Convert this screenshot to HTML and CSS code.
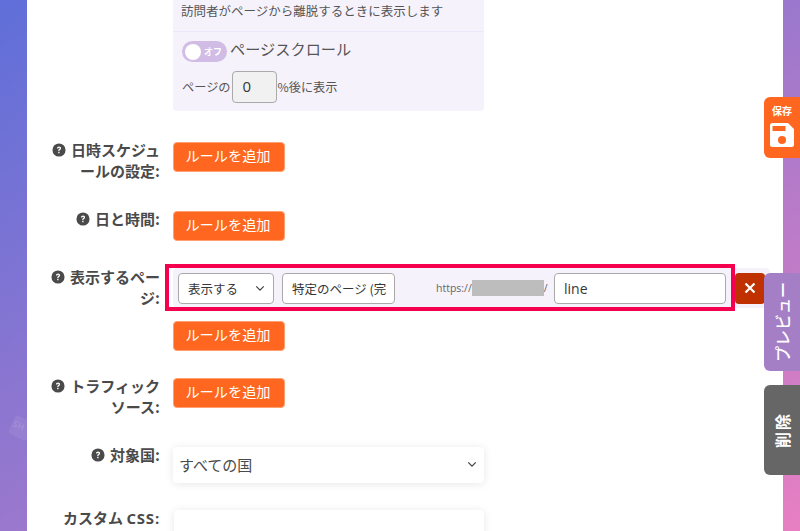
FILE: index.html
```html
<!DOCTYPE html>
<html lang="ja">
<head>
<meta charset="utf-8">
<title>設定</title>
<link rel="stylesheet" href="styles.css">
</head>
<body>
<div class="mark">SH</div>
<main class="panel">
  <section class="trigger-card">
    <p class="note">訪問者がページから離脱するときに表示します</p>
    <div class="scroll-block">
      <div class="toggle-line">
        <span class="toggle"><span class="knob"></span><span class="off">オフ</span></span>
        <span class="toggle-label">ページスクロール</span>
      </div>
      <div class="percent-line">
        <span>ページの</span>
        <span class="num">0</span>
        <span>%後に表示</span>
      </div>
    </div>
  </section>

  <div class="row row-schedule">
    <div class="label"><svg class="help" viewBox="0 0 16 16"><circle cx="8" cy="8" r="7.5" fill="#4a4a4a"/><path d="M5.7 6.2c0-1.4 1-2.2 2.4-2.2 1.3 0 2.3.8 2.3 2 0 1.7-1.9 1.7-1.9 3H7.100c0-2 1.800-2 1.800-3 0-.4-.3-.7-.8-.7-.6 0-.9.4-.9 1z" fill="#fff"/><rect x="7.100" y="10" width="1.500" height="1.700" fill="#fff"/></svg>日時スケジュールの設定:</div>
    <div class="value"><button class="add">ルールを追加</button></div>
  </div>

  <div class="row row-date">
    <div class="label"><svg class="help" viewBox="0 0 16 16"><circle cx="8" cy="8" r="7.5" fill="#4a4a4a"/><path d="M5.7 6.2c0-1.4 1-2.2 2.4-2.2 1.3 0 2.3.8 2.3 2 0 1.7-1.9 1.7-1.9 3H7.100c0-2 1.800-2 1.800-3 0-.4-.3-.7-.8-.7-.6 0-.9.4-.9 1z" fill="#fff"/><rect x="7.100" y="10" width="1.500" height="1.700" fill="#fff"/></svg>日と時間:</div>
    <div class="value"><button class="add">ルールを追加</button></div>
  </div>

  <div class="row row-pages">
    <div class="label label-pages"><svg class="help" viewBox="0 0 16 16"><circle cx="8" cy="8" r="7.5" fill="#4a4a4a"/><path d="M5.7 6.2c0-1.4 1-2.2 2.4-2.2 1.3 0 2.3.8 2.3 2 0 1.7-1.9 1.7-1.9 3H7.100c0-2 1.800-2 1.800-3 0-.4-.3-.7-.8-.7-.6 0-.9.4-.9 1z" fill="#fff"/><rect x="7.100" y="10" width="1.500" height="1.700" fill="#fff"/></svg>表示するページ:</div>
    <div class="value">
      <div class="rule">
        <div class="field select-show"><span>表示する</span><svg class="chev" viewBox="0 0 12 8"><path d="M1.500 1.500 6 6l4.500-4.500" fill="none" stroke="#444" stroke-width="1.500"/></svg></div>
        <div class="field select-kind"><span>特定のページ (完</span></div>
        <div class="url"><span>https://</span><span class="blur"></span><span>/</span></div>
        <div class="field path">line</div>
        <button class="remove" aria-label="削除"><svg viewBox="0 0 12 12"><path d="M1.500 1.500l9 9M10.500 1.500l-9 9" stroke="#fff" stroke-width="2.200" fill="none"/></svg></button>
      </div>
      <button class="add add-below">ルールを追加</button>
    </div>
  </div>

  <div class="row row-traffic">
    <div class="label"><svg class="help" viewBox="0 0 16 16"><circle cx="8" cy="8" r="7.5" fill="#4a4a4a"/><path d="M5.7 6.2c0-1.4 1-2.2 2.4-2.2 1.3 0 2.3.8 2.3 2 0 1.7-1.9 1.7-1.9 3H7.100c0-2 1.800-2 1.800-3 0-.4-.3-.7-.8-.7-.6 0-.9.4-.9 1z" fill="#fff"/><rect x="7.100" y="10" width="1.500" height="1.700" fill="#fff"/></svg>トラフィックソース:</div>
    <div class="value"><button class="add">ルールを追加</button></div>
  </div>

  <div class="row row-country">
    <div class="label"><svg class="help" viewBox="0 0 16 16"><circle cx="8" cy="8" r="7.5" fill="#4a4a4a"/><path d="M5.7 6.2c0-1.4 1-2.2 2.4-2.2 1.3 0 2.3.8 2.3 2 0 1.7-1.9 1.7-1.9 3H7.100c0-2 1.800-2 1.800-3 0-.4-.3-.7-.8-.7-.6 0-.9.4-.9 1z" fill="#fff"/><rect x="7.100" y="10" width="1.500" height="1.700" fill="#fff"/></svg>対象国:</div>
    <div class="value">
      <div class="country"><span>すべての国</span><svg class="chev" viewBox="0 0 12 8"><path d="M1.500 1.500 6 6l4.500-4.500" fill="none" stroke="#444" stroke-width="1.500"/></svg></div>
    </div>
  </div>

  <div class="row row-css">
    <div class="label label-css">カスタム <span class="latin">CSS:</span></div>
    <div class="value"><div class="css-box"></div></div>
  </div>
</main>

<div class="highlight"></div>

<aside class="tabs">
  <button class="tab tab-save">
    <span class="save-text">保存</span>
    <svg class="save-icon" viewBox="0 0 24 24"><path d="M0 2.500A2.500 2.500 0 0 1 2.500 0H18l6 6v15.500a2.500 2.500 0 0 1-2.500 2.500h-19A2.500 2.500 0 0 1 0 21.500z" fill="#fff"/><rect x="2.500" y="3" width="13" height="5" fill="#ff6720"/><circle cx="12" cy="17" r="4" fill="#ff6720"/></svg>
  </button>
  <button class="tab tab-preview"><span class="side">プレビュー</span></button>
  <button class="tab tab-delete"><span class="side side-small">削除</span></button>
</aside>
</body>
</html>
```
FILE: styles.css
```css
* { box-sizing: border-box; }
html, body { margin: 0; height: 531px; overflow: hidden; }
body {
  position: relative;
  background: linear-gradient(146deg, #5f6fd9 0%, #9a78cd 50%, #e87fc2 100%);
  font-family: "Noto Sans CJK JP", "Noto Sans", sans-serif;
  color: #4a4a4a;
}
.mark {
  position: absolute;
  left: 11px;
  top: 418px;
  width: 20px;
  height: 20px;
  padding: 3px 0 0 1px;
  background: rgba(255,255,255,.07);
  border-radius: 3px;
  color: rgba(255,255,255,.12);
  font: 700 9px/12px "Open Sans", sans-serif;
  transform: rotate(25deg);
}
.panel {
  margin: 0 17px 0 27px;
  height: 531px;
  background: #fff;
  overflow: hidden;
  padding-left: 146px;
}
.trigger-card {
  width: 311px;
  height: 111px;
  background: #f5f2fb;
  border-radius: 0 0 4px 4px;
}
.note {
  margin: 0;
  height: 32px;
  padding: 2px 0 0 8px;
  font-size: 12.5px;
  line-height: 18px;
  color: #555;
  border-bottom: 1px solid #eee7fa;
}
.scroll-block { padding: 9px 9px 0; }
.toggle-line { display: flex; align-items: center; height: 21px; gap: 3px; }
.toggle {
  width: 45px;
  height: 21px;
  border-radius: 11px;
  background: #d0bce5;
  display: flex;
  align-items: center;
  padding-left: 3px;
  gap: 3px;
}
.knob { width: 16px; height: 16px; border-radius: 50%; background: #fff; }
.off { color: #fff; font-size: 9px; font-weight: 700; line-height: 1; }
.toggle-label { font-size: 15.2px; color: #555; line-height: 20px; padding-bottom: 7px; }
.percent-line {
  display: flex;
  align-items: center;
  margin-top: 9px;
  font-size: 12.2px;
  color: #555;
  gap: 1px;
}
.num {
  width: 45px;
  height: 32px;
  background: #f1f1f1;
  border: 1px solid #aaa;
  border-radius: 4px;
  padding-left: 10px;
  font: 15px/29px "Open Sans", sans-serif;
  color: #363636;
}
.row { display: flex; }
.label {
  width: 133px;
  margin: -3px 13px 0 -146px;
  flex: none;
  padding-left: 20px;
  text-align: right;
  font-size: 15px;
  font-weight: 700;
  line-height: 21px;
  color: #4a4a4a;
}
.label-pages { margin-top: -6px; }
.help { width: 14px; height: 14px; margin-right: 5px; vertical-align: -1px; }
.value { width: 311px; flex: none; }
.add {
  display: block;
  width: 112px;
  height: 30px;
  padding: 0 2px 3px 0;
  background: #ff6720;
  border: 1px solid #ffa070;
  border-radius: 4px;
  color: #fff;
  font: 14.2px/25px "Noto Sans CJK JP", sans-serif;
}
.row-schedule { margin-top: 31px; height: 69px; }
.row-date { height: 61px; }
.row-pages { height: 106px; }
.row-traffic { height: 69px; }
.row-country { height: 63px; }
.rule {
  display: flex;
  align-items: center;
  width: 597px;
  height: 40px;
  margin-top: -4px;
  padding-left: 5px;
  background: #f5f2fb;
  border-radius: 4px;
}
.field {
  height: 31px;
  background: #fff;
  border: 1px solid #aaa;
  border-radius: 4px;
  display: flex;
  align-items: center;
  font-size: 12.5px;
  color: #363636;
  white-space: nowrap;
  overflow: hidden;
}
.select-show { width: 96px; padding: 0 8px 0 9px; justify-content: space-between; }
.select-kind { width: 113px; margin-left: 8px; padding-left: 9px; }
.url {
  width: 159px;
  display: flex;
  align-items: center;
  padding-left: 41px;
  font: 10.5px "Open Sans", sans-serif;
  color: #666;
}
.blur { width: 72px; height: 16px; background: #bdbdbd; }
.path {
  width: 172px;
  padding-left: 9px;
  font: 14px "Open Sans", sans-serif;
}
.remove {
  width: 30px;
  height: 31px;
  margin-left: 9px;
  padding: 0;
  border: 0;
  border-radius: 4px;
  background: #bf3100;
  display: flex;
  align-items: center;
  justify-content: center;
}
.remove svg { width: 12px; height: 12px; }
.add-below { margin-top: 13px; }
.chev { width: 10px; height: 7px; flex: none; }
.country {
  height: 36px;
  border-radius: 4px;
  background: #fff;
  box-shadow: 0 1px 8px rgba(0,0,0,.1);
  display: flex;
  align-items: center;
  justify-content: space-between;
  padding: 0 7px 2px 6px;
  font-size: 15px;
  color: #4a4a4a;
}
.css-box {
  height: 60px;
  margin-left: 1px;
  border-radius: 4px;
  background: #fff;
  box-shadow: 0 1px 8px rgba(0,0,0,.1);
}
.label-css { padding-left: 0; white-space: nowrap; }
.latin { font-family: "Open Sans", sans-serif; letter-spacing: .8px; }
.highlight {
  position: absolute;
  left: 165px;
  top: 264px;
  width: 570px;
  height: 47px;
  border: 4px solid #f5004f;
  pointer-events: none;
}
.tabs {
  position: absolute;
  right: 0;
  top: 97px;
  width: 36px;
  display: flex;
  flex-direction: column;
}
.tab {
  width: 36px;
  padding: 0;
  border: 0;
  border-radius: 6px 0 0 6px;
  color: #fff;
  display: flex;
  align-items: center;
  justify-content: center;
  font-family: "Noto Sans CJK JP", sans-serif;
}
.tab-save {
  height: 61px;
  background: #ff6720;
  flex-direction: column;
  justify-content: flex-start;
  padding-top: 8px;
}
.save-text { font-size: 10px; font-weight: 700; line-height: 12px; }
.save-icon { width: 24px; height: 24px; margin-top: 6px; flex: none; }
.tab-preview { height: 98px; margin-top: 115px; background: #a57fc6; }
.tab-delete { height: 90px; margin-top: 14px; background: #666; }
.side {
  writing-mode: vertical-rl;
  text-orientation: sideways;
  transform: rotate(180deg);
  font-size: 16px;
  font-weight: 500;
  line-height: 1;
}
.side-small { font-size: 16px; font-weight: 700; letter-spacing: 2px; }
```
